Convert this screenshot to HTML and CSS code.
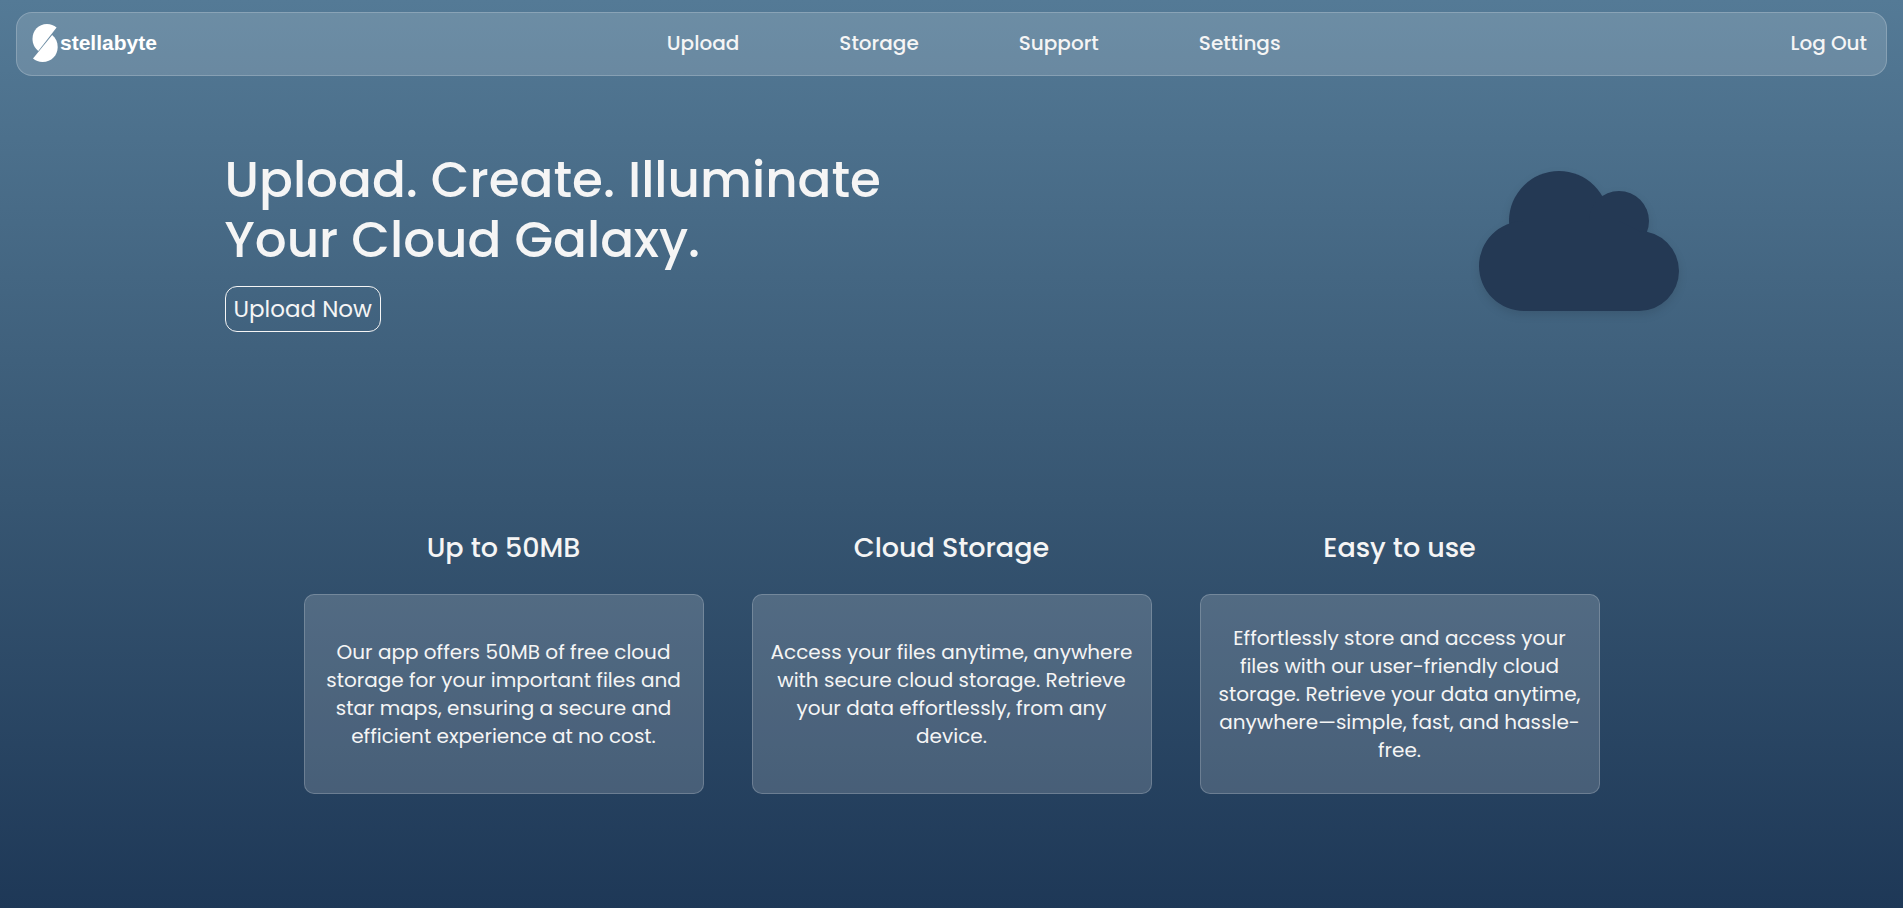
FILE: index.html
```html
<!DOCTYPE html>
<html lang="en">
<head>
<meta charset="utf-8">
<meta name="viewport" content="width=device-width, initial-scale=1">
<title>stellabyte</title>
<link rel="stylesheet" href="styles.css">
</head>
<body>
<header class="navbar">
  <a class="brand" href="#">
    <svg class="brand-mark" viewBox="0 0 26 38" aria-hidden="true">
      <path d="M24.6 3.5C21.8 1.2 18.7 0 15 0C6.5 0 .5 6.5.5 14.8C.5 19.8 2.7 24.3 6.3 27Z"/>
      <path d="M1 34.5C3.6 36.8 6.8 38 10.5 38C19.5 38 25.7 31.3 25.7 23C25.7 18.2 23.8 14 20.2 11Z"/>
    </svg>
    <span>stellabyte</span>
  </a>
  <nav class="menu">
    <a href="#">Upload</a>
    <a href="#">Storage</a>
    <a href="#">Support</a>
    <a href="#">Settings</a>
  </nav>
  <a class="logout" href="#">Log Out</a>
</header>
<main>
  <section class="hero">
    <div class="hero-copy">
      <h1>Upload. Create. Illuminate<br>Your Cloud Galaxy.</h1>
      <button class="cta" type="button">Upload Now</button>
    </div>
    <svg class="cloud" viewBox="0 0 200 140" aria-hidden="true">
      <circle cx="80" cy="50" r="50"/>
      <circle cx="140" cy="50" r="30"/>
      <path d="M45 50A45 45 0 0 0 45 140H160A40 40 0 0 0 160 60L140 50Z"/>
    </svg>
  </section>
  <section class="features">
    <article class="feature">
      <h2>Up to 50MB</h2>
      <div class="card"><p>Our app offers 50MB of free cloud storage for your important files and star maps, ensuring a secure and efficient experience at no cost.</p></div>
    </article>
    <article class="feature">
      <h2>Cloud Storage</h2>
      <div class="card"><p>Access your files anytime, anywhere with secure cloud storage. Retrieve your data effortlessly, from any device.</p></div>
    </article>
    <article class="feature">
      <h2>Easy to use</h2>
      <div class="card"><p>Effortlessly store and access your files with our user-friendly cloud storage. Retrieve your data anytime, anywhere—simple, fast, and hassle-free.</p></div>
    </article>
  </section>
</main>
</body>
</html>
```
FILE: styles.css
```css
* {
  box-sizing: border-box;
}

body {
  margin: 0;
  min-height: 100vh;
  padding: 12px 16px;
  background: linear-gradient(#547a96, #375672 55%, #1e3857);
  color: #f5f5f5;
  font-family: Poppins, Inter, sans-serif;
}

h1, h2, p {
  margin: 0;
}

a {
  color: inherit;
  text-decoration: none;
}

.navbar {
  display: flex;
  align-items: center;
  justify-content: space-between;
  height: 64px;
  padding: 0 19px 2px 15px;
  border: 1px solid rgba(255, 255, 255, 0.2);
  border-radius: 16px;
  background: rgba(255, 255, 255, 0.15);
  font-size: 20px;
  font-weight: 500;
}

.brand {
  display: flex;
  align-items: center;
  gap: 2px;
  color: #fff;
  font-family: "Liberation Sans", Arial, sans-serif;
  font-size: 21px;
  font-weight: 700;
}

.brand-mark {
  width: 26px;
  height: 38px;
  fill: #fff;
}

.menu {
  display: flex;
  gap: 100px;
}

.hero {
  display: flex;
  justify-content: space-between;
  align-items: flex-start;
  max-width: 1454px;
  margin: 0 auto;
  padding-top: 74px;
}

h1 {
  font-size: 50px;
  font-weight: 500;
  line-height: 60px;
}

.cta {
  margin-top: 16px;
  height: 46px;
  padding: 0 8px;
  border: 1px solid #f5f5f5;
  border-radius: 12px;
  background: transparent;
  color: inherit;
  font: inherit;
  font-size: 23px;
}

.cloud {
  width: 200px;
  height: 140px;
  margin-top: 21px;
  overflow: visible;
  fill: #243954;
  filter: drop-shadow(0 4px 4px rgba(0, 0, 0, 0.1));
}

.features {
  display: flex;
  justify-content: center;
  gap: 48px;
  margin-top: 195px;
}

.feature {
  flex: 0 1 400px;
  text-align: center;
}

h2 {
  font-size: 27px;
  font-weight: 500;
  line-height: 42px;
}

.card {
  display: flex;
  align-items: center;
  justify-content: center;
  min-height: 200px;
  margin-top: 25px;
  padding: 16px;
  border: 1px solid rgba(255, 255, 255, 0.2);
  border-radius: 10px;
  background: rgba(255, 255, 255, 0.16);
  font-size: 20px;
  line-height: 28px;
}
```
